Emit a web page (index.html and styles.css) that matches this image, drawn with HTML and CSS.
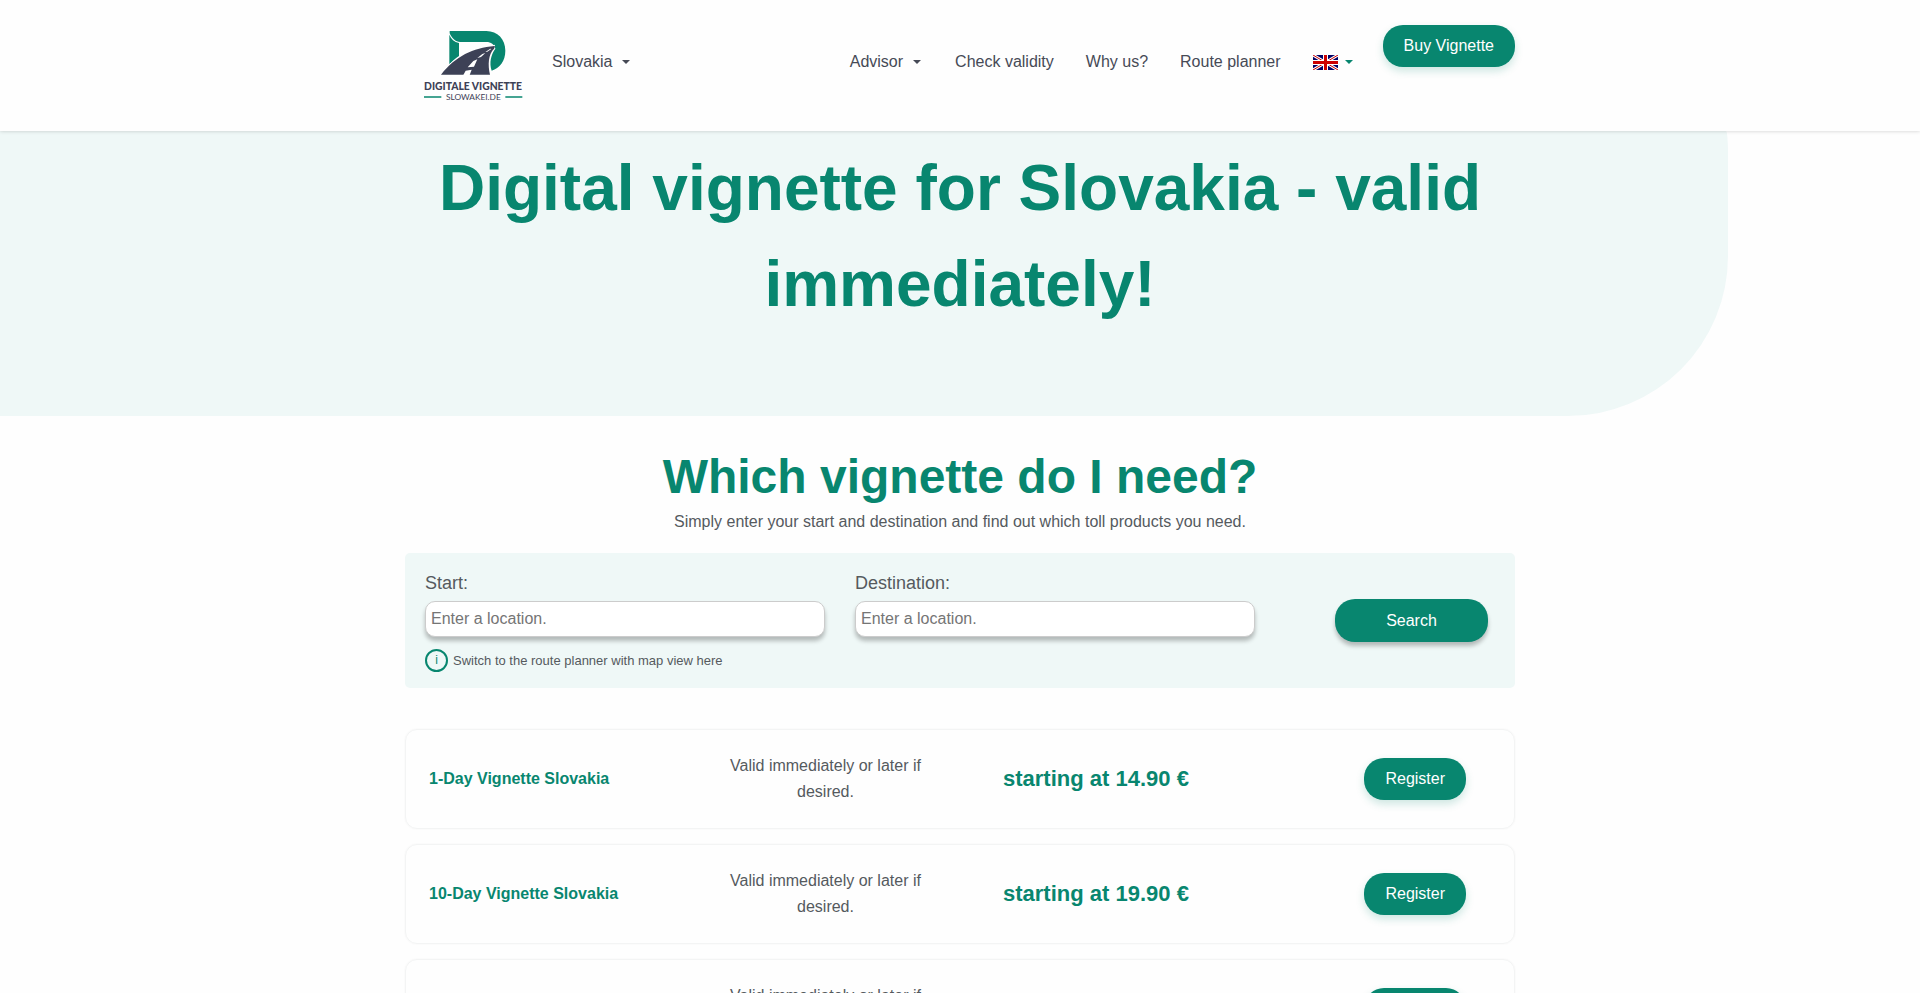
FILE: index.html
```html
<!DOCTYPE html>
<html lang="en">

<head>
  <meta charset="utf-8">
  <meta name="viewport" content="width=device-width, initial-scale=1">
  <title>Digital vignette for Slovakia</title>
  <link rel="stylesheet" href="styles.css">
</head>

<body>
  <header class="header">
    <div class="container header-inner">
      <a class="logo" href="#" aria-label="Digitale Vignette">
        <svg viewBox="0 0 300 225" width="100" height="75">
          <path fill="#08866f" d="M80 3H190C224 3 247 28 247 62C247 94 230 114 206 122C198 98 204 74 217 56C214 43 204 36 190 36H112C97 36 86 24 80 10Z" />
          <path fill="#08866f" d="M79 14C84 27 94 36 108 39V78C98 85 88 93 79 103Z" />
          <path fill="none" stroke="#fff" stroke-width="3" d="M50 132C96 80 150 52 216 46" />
          <path fill="#3d4156" d="M54 134C98 78 150 54 214 48C216 50 215 53 213 56C196 72 194 104 201 134Z" />
          <path fill="#fff" d="M121 135L128 122L146 119L140 135ZM134 112L151 93L163 88L153 110ZM163 84L178 72L187 69L174 81ZM187 66L202 56L205 57L193 65Z" />
          <text class="logo-name" x="150" y="179" text-anchor="middle">DIGITALE VIGNETTE</text>
          <path stroke="#08866f" stroke-width="4" d="M3 201H55M247 201H298" />
          <text class="logo-domain" x="151" y="210" text-anchor="middle">SLOWAKEI.DE</text>
        </svg>
      </a>
      <a class="nav-link nav-country" href="#">Slovakia <span class="caret"></span></a>
      <nav class="nav">
        <a class="nav-link" href="#">Advisor <span class="caret"></span></a>
        <a class="nav-link" href="#">Check validity</a>
        <a class="nav-link" href="#">Why us?</a>
        <a class="nav-link" href="#">Route planner</a>
        <a class="nav-link nav-lang" href="#" aria-label="English">
          <svg viewBox="0 0 50 30" width="25" height="15">
            <path fill="#006" d="M0 0H50V30H0Z" />
            <path stroke="#fff" stroke-width="6" d="M0 0L50 30M50 0L0 30" />
            <path stroke="#c00" stroke-width="2" d="M0 0L50 30M50 0L0 30" />
            <path stroke="#fff" stroke-width="10" d="M25 0V30M0 15H50" />
            <path stroke="#c00" stroke-width="6" d="M25 0V30M0 15H50" />
          </svg>
          <span class="caret"></span>
        </a>
      </nav>
      <a class="btn btn-buy" href="#">Buy Vignette</a>
    </div>
  </header>

  <main>
    <section class="hero">
      <h1 class="container">Digital vignette for Slovakia - valid immediately!</h1>
    </section>

    <section class="container planner">
      <h2>Which vignette do I need?</h2>
      <p class="planner-lead">Simply enter your start and destination and find out which toll products you need.</p>
      <form class="search">
        <div class="field">
          <label for="start">Start:</label>
          <input id="start" type="text" placeholder="Enter a location.">
          <a class="hint" href="#"><span class="info">i</span>Switch to the route planner with map view here</a>
        </div>
        <div class="field">
          <label for="destination">Destination:</label>
          <input id="destination" type="text" placeholder="Enter a location.">
        </div>
        <button class="btn btn-search" type="button">Search</button>
      </form>
    </section>

    <section class="container products">
      <article class="product">
        <h3>1-Day Vignette Slovakia</h3>
        <p class="product-text">Valid immediately or later if desired.</p>
        <p class="product-price">starting at 14.90 €</p>
        <a class="btn" href="#">Register</a>
      </article>
      <article class="product">
        <h3>10-Day Vignette Slovakia</h3>
        <p class="product-text">Valid immediately or later if desired.</p>
        <p class="product-price">starting at 19.90 €</p>
        <a class="btn" href="#">Register</a>
      </article>
      <article class="product">
        <h3></h3>
        <p class="product-text">Valid immediately or later if desired.</p>
        <p class="product-price"></p>
        <a class="btn" href="#">Register</a>
      </article>
    </section>
  </main>
</body>

</html>
```

FILE: styles.css
```css
* {
  box-sizing: border-box;
  margin: 0;
  padding: 0;
}

html,
body {
  height: 100%;
}

body {
  overflow: hidden;
  font-family: "Liberation Sans", Arial, sans-serif;
  font-size: 16px;
  line-height: 26px;
  color: #555a5e;
  background: #fefefe;
}

a {
  color: inherit;
  text-decoration: none;
}

.container {
  width: 100%;
  max-width: 1110px;
  margin: 0 auto;
}

/* header */

.header {
  position: relative;
  background: #fefefe;
  box-shadow: 0 0 4px rgba(0, 0, 0, .2);
}

.header-inner {
  display: flex;
  align-items: flex-start;
  padding: 25px 0 25px 18px;
}

.logo {
  display: flex;
  height: 81px;
  padding-top: 5px;
}

.logo-name,
.logo-domain {
  font-family: Lato, sans-serif;
  fill: #3d4156;
}

.logo-name {
  font-size: 31px;
  font-weight: 900;
}

.logo-domain {
  font-size: 25px;
}

.nav {
  display: flex;
  gap: 32px;
  margin-left: auto;
}

.nav-link {
  display: flex;
  align-items: center;
  height: 74px;
  color: #464a56;
}

.nav-country {
  margin-left: 29px;
}

.nav-lang {
  color: #08866f;
}

.caret {
  margin: 0 2px 0 10px;
  border: 4px solid transparent;
  border-top-color: currentColor;
  border-bottom: 0;
}

.nav-lang .caret {
  margin-left: 7px;
}

.btn {
  display: block;
  padding: 8px 21px;
  border: 0;
  border-radius: 20px;
  font: inherit;
  color: #fff;
  text-align: center;
  background: #08866f;
  box-shadow: 0 4px 8px rgba(8, 134, 111, .2);
}

.btn-buy {
  margin-left: 28px;
}

/* hero */

.hero {
  width: 90%;
  height: 285px;
  border-radius: 0 2px 160px 0 / 0 22px 160px 0;
  background: #eff8f7;
}

.hero h1 {
  position: relative;
  left: 5.5556%;
  padding-top: 9px;
  font-size: 64px;
  line-height: 96px;
  text-align: center;
  color: #08866f;
}

/* route search */

.planner {
  padding-top: 32px;
}

.planner h2 {
  font-size: 48px;
  line-height: 58px;
  text-align: center;
  color: #08866f;
}

.planner-lead {
  padding: 3px 0 18px;
  text-align: center;
}

.search {
  display: flex;
  align-items: flex-start;
  gap: 30px;
  padding: 17px 27px 16px 20px;
  border-radius: 5px;
  background: #eff8f7;
}

.field {
  flex: 0 1 400px;
}

.field label {
  display: block;
  font-size: 18px;
}

.field input {
  width: 100%;
  height: 36px;
  margin-top: 5px;
  padding: 0 5px;
  border: 1px solid #ccc;
  border-radius: 10px;
  font: inherit;
  background: #fff;
  box-shadow: 0 4px 4px rgba(0, 0, 0, .25);
}

.field input::placeholder {
  color: #757575;
}

.hint {
  display: flex;
  align-items: center;
  gap: 5px;
  margin-top: 12px;
  font-size: 13px;
  line-height: 20px;
}

.info {
  width: 23px;
  height: 23px;
  border: 2px solid #08866f;
  border-radius: 50%;
  font-size: 12px;
  line-height: 19px;
  text-align: center;
  color: #08866f;
}

.btn-search {
  width: 153px;
  margin: 29px 0 0 auto;
  padding-top: 9px;
  box-shadow: 0 4px 4px rgba(0, 0, 0, .25);
}

/* products */

.products {
  display: grid;
  gap: 15px;
  padding-top: 41px;
}

.product {
  display: grid;
  grid-template-columns: 300px 237px 270px 1fr;
  align-items: center;
  padding: 23px;
  border: 1px solid #f3f4f4;
  border-radius: 12px;
  box-shadow: 0 0 2px rgba(0, 0, 0, .05);
}

.product h3 {
  font-size: 16px;
  color: #08866f;
}

.product-text {
  padding-right: 40px;
  margin-left: -4px;
  text-align: center;
}

.product-price {
  padding-left: 37px;
  font-size: 22px;
  font-weight: bold;
  color: #08866f;
}

.product .btn {
  justify-self: end;
  margin-right: 25px;
}
```
